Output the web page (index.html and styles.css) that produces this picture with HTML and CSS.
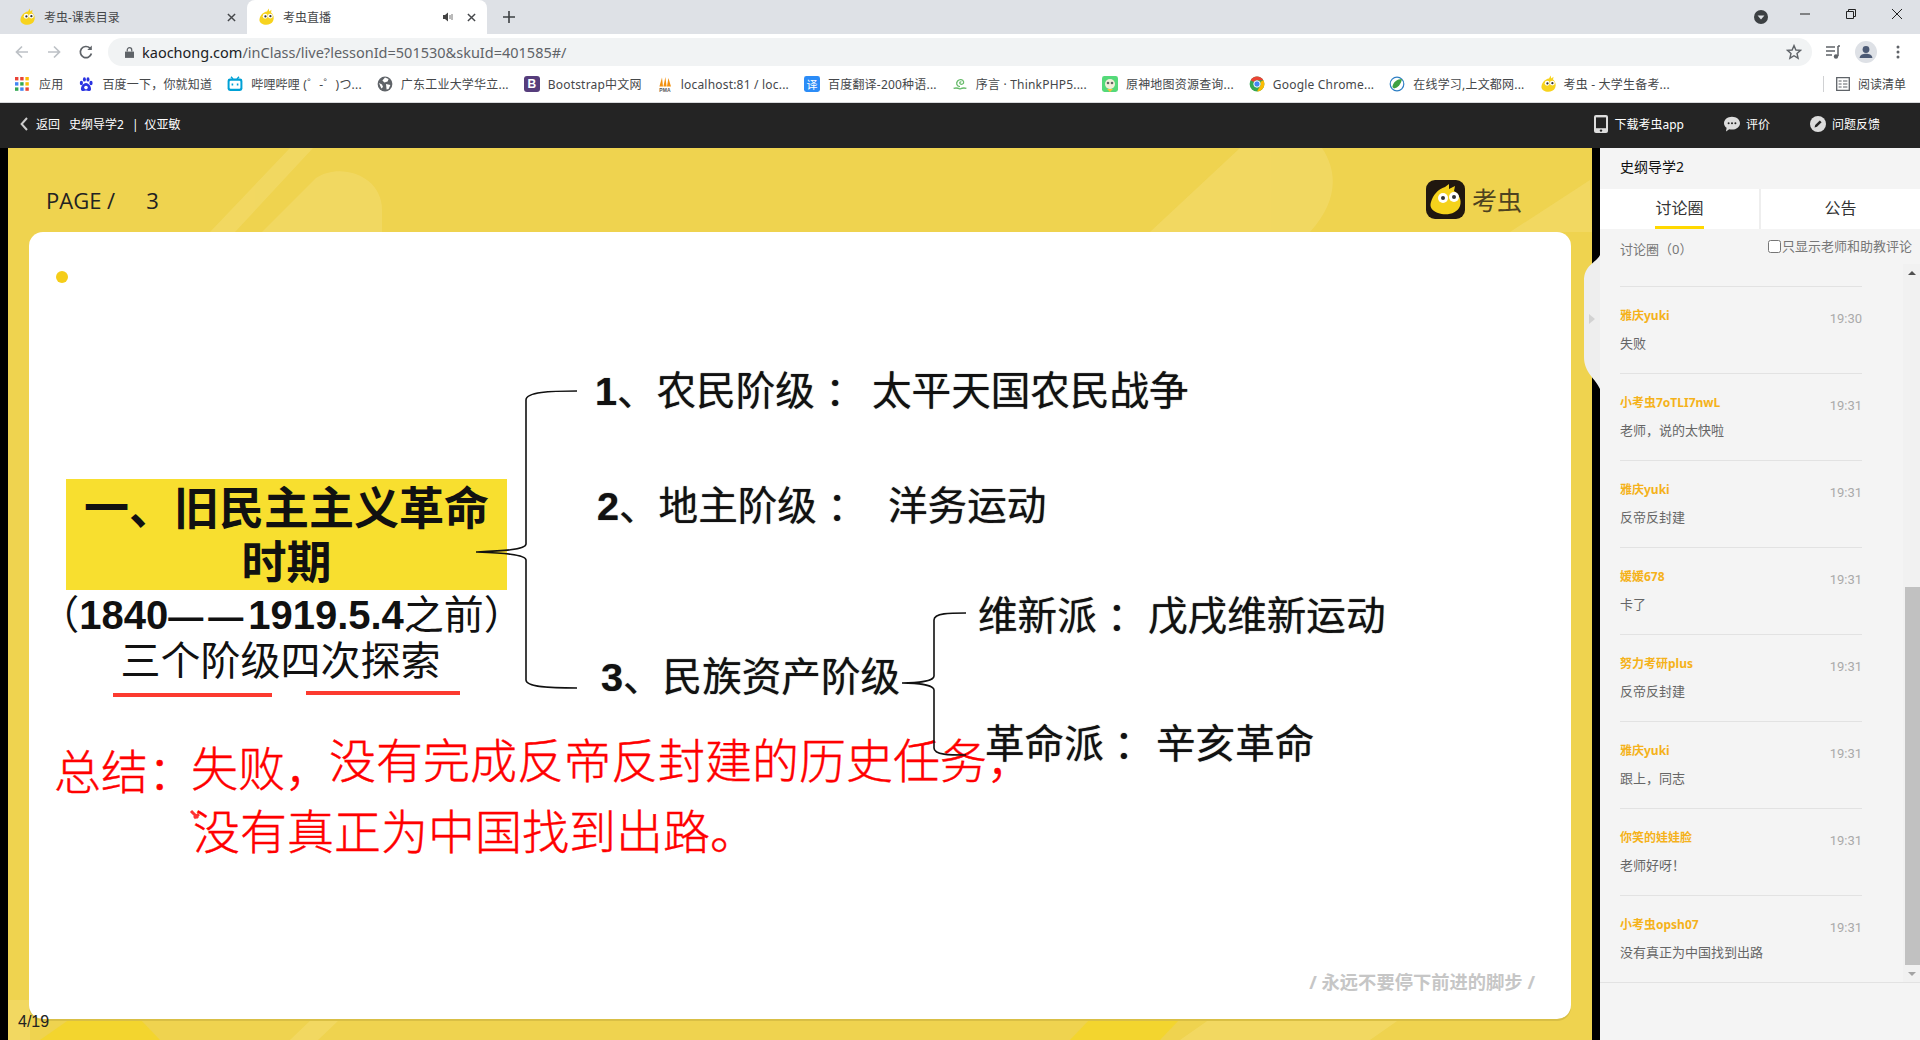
FILE: index.html
```html
<!DOCTYPE html>
<html lang="zh-CN">
    <head>
        <meta charset="utf-8">
        <title>考虫直播</title>
        <link rel="stylesheet" href="styles.css">
    </head>
    <body>
        <svg class="defs" width="0" height="0">
            <symbol id="chick" viewBox="0 0 16 16">
                <path d="M8 3 L9.5 .5 L10 3 L12 1.5 L11.6 4 C14 6 14.6 9 13.4 11.6 C12 14.6 8 15.6 5 14.6 C2.4 13.8 .8 12 1.4 9.6 C2 6.4 4.4 3.6 8 3 Z" fill="#f7d31e"/>
                <circle cx="6.4" cy="7.4" r="2.2" fill="#fff"/>
                <circle cx="11" cy="7.2" r="2.2" fill="#fff"/>
                <circle cx="6.6" cy="7.5" r="1" fill="#333"/>
                <circle cx="11" cy="7.3" r="1" fill="#333"/>
            </symbol>
        </svg>

        <div class="tabstrip">
            <div class="tab">
                <svg class="favicon"><use href="#chick"/></svg>
                <span class="tab-title">考虫-课表目录</span>
                <svg class="tab-close" viewBox="0 0 10 10"><path d="M1 1 L9 9 M9 1 L1 9"/></svg>
            </div>
            <div class="tab tab--active">
                <svg class="favicon"><use href="#chick"/></svg>
                <span class="tab-title">考虫直播</span>
                <svg class="tab-sound" viewBox="0 0 12 12"><path d="M1 4 H3 L6 1.5 V10.5 L3 8 H1 Z" fill="#444"/><path d="M8 4 V8 M10 3 V9" stroke="#777" fill="none"/></svg>
                <svg class="tab-close" viewBox="0 0 10 10"><path d="M1 1 L9 9 M9 1 L1 9"/></svg>
            </div>
            <svg class="tab-new" viewBox="0 0 12 12"><path d="M6 0 V12 M0 6 H12"/></svg>
            <div class="window-controls">
                <svg class="profile-drop" viewBox="0 0 14 14"><circle cx="7" cy="7" r="7" fill="#3c4043"/><path d="M3.6 5.4 H10.4 L7 9.6 Z" fill="#dee1e6"/></svg>
                <svg class="win-btn win-min" viewBox="0 0 10 10"><path d="M0 5 H10"/></svg>
                <svg class="win-btn win-max" viewBox="0 0 10 10"><path d="M.5 2.5 H7.5 V9.5 H.5 Z M2.5 2.5 V.5 H9.5 V7.5 H7.5"/></svg>
                <svg class="win-btn win-close" viewBox="0 0 10 10"><path d="M0 0 L10 10 M10 0 L0 10"/></svg>
            </div>
        </div>

        <div class="toolbar">
            <svg class="nav-icon nav-off" viewBox="0 0 16 16"><path d="M14 8 H2.5 M8 2.5 L2.5 8 L8 13.5"/></svg>
            <svg class="nav-icon nav-off" viewBox="0 0 16 16"><path d="M2 8 H13.5 M8 2.5 L13.5 8 L8 13.5"/></svg>
            <svg class="nav-icon" viewBox="0 0 16 16"><path d="M13.4 9.5 A5.6 5.6 0 1 1 12 4.2"/><path d="M13.8 1.5 V6 H9.3 Z" fill="#5f6368" stroke="none"/></svg>
            <div class="omnibox">
                <svg class="lock" viewBox="0 0 10 12"><path d="M0 5 H10 V12 H0 Z" fill="#5f6368"/><path d="M2.5 5 V3.2 A2.5 2.5 0 0 1 7.5 3.2 V5" fill="none" stroke="#5f6368" stroke-width="1.4"/></svg>
                <span class="url"><span class="url-host">kaochong.com</span>/inClass/live?lessonId=501530&amp;skuId=401585#/</span>
                <svg class="star" viewBox="0 0 16 16"><path d="M8 1.6 L9.9 6 L14.6 6.4 L11 9.5 L12.1 14.2 L8 11.7 L3.9 14.2 L5 9.5 L1.4 6.4 L6.1 6 Z"/></svg>
            </div>
            <svg class="tool-media" viewBox="0 0 16 16"><path d="M1 3 H10 M1 7 H10 M1 11 H7 M13 2 V12" fill="none" stroke="#5f6368" stroke-width="1.5"/><path d="M13 2 H15" stroke="#5f6368" stroke-width="1.5"/><circle cx="11" cy="12.5" r="2.2" fill="#5f6368"/></svg>
            <svg class="tool-avatar" viewBox="0 0 22 22"><circle cx="11" cy="11" r="11" fill="#dee1e6"/><circle cx="11" cy="8.5" r="3.4" fill="#4c5a75"/><path d="M4.6 17 C5 13.6 8 12.8 11 12.8 C14 12.8 17 13.6 17.4 17 Z" fill="#4c5a75"/></svg>
            <svg class="tool-menu" viewBox="0 0 4 14"><circle cx="2" cy="2" r="1.5"/><circle cx="2" cy="7" r="1.5"/><circle cx="2" cy="12" r="1.5"/></svg>
        </div>

        <div class="bookmarks">
            <a class="bm bm--apps">
                <svg class="bm-icon" viewBox="0 0 14 14">
                    <rect width="3.4" height="3.4" fill="#ea4335"/><rect x="5.2" width="3.4" height="3.4" fill="#ea4335"/><rect x="10.4" width="3.4" height="3.4" fill="#fbbc04"/>
                    <rect y="5.2" width="3.4" height="3.4" fill="#4285f4"/><rect x="5.2" y="5.2" width="3.4" height="3.4" fill="#34a853"/><rect x="10.4" y="5.2" width="3.4" height="3.4" fill="#fbbc04"/>
                    <rect y="10.4" width="3.4" height="3.4" fill="#34a853"/><rect x="5.2" y="10.4" width="3.4" height="3.4" fill="#4285f4"/><rect x="10.4" y="10.4" width="3.4" height="3.4" fill="#ea4335"/>
                </svg>
                应用
            </a>
            <a class="bm">
                <svg class="bm-icon" viewBox="0 0 16 16"><g fill="#2932e1"><ellipse cx="3.4" cy="7" rx="1.6" ry="2.2"/><ellipse cx="6.4" cy="3.4" rx="1.5" ry="2.2"/><ellipse cx="10" cy="3.4" rx="1.5" ry="2.2"/><ellipse cx="13" cy="7" rx="1.6" ry="2.2"/><path d="M8 7 C11 7 13.4 11 13 13.4 C12.6 15.6 10 15 8 14.6 C6 15 3.4 15.6 3 13.4 C2.6 11 5 7 8 7 Z"/></g><circle cx="8" cy="11.6" r="1.8" fill="#fff"/></svg>
                百度一下，你就知道
            </a>
            <a class="bm">
                <svg class="bm-icon" viewBox="0 0 16 16"><path d="M4 .8 L6 3 M12 .8 L10 3" stroke="#00a1d6" stroke-width="1.4"/><rect x=".6" y="2.6" width="14.8" height="12.4" rx="2.4" fill="#00a1d6"/><rect x="2.6" y="4.8" width="10.8" height="8" rx="1" fill="#fff"/><path d="M5.4 7.6 V9.4 M10.6 7.6 V9.4" stroke="#00a1d6" stroke-width="1.6"/></svg>
                哔哩哔哩 (゜-゜)つ...
            </a>
            <a class="bm">
                <svg class="bm-icon" viewBox="0 0 16 16"><circle cx="8" cy="8" r="7.4" fill="#5f6368"/><path d="M8 1.6 L11.6 3 L10.6 5.4 L7.4 6.4 L5.4 4.4 Z M9 8 L13.4 9 L11.6 13 L9.6 13.6 Z M2 7 L5 8.6 L6 11 L4.4 12.6 Z" fill="#fff"/></svg>
                广东工业大学华立...
            </a>
            <a class="bm">
                <svg class="bm-icon" viewBox="0 0 16 16"><rect width="16" height="16" rx="3" fill="#563d7c"/><text x="8" y="12.4" class="bm-glyph">B</text></svg>
                Bootstrap中文网
            </a>
            <a class="bm">
                <svg class="bm-icon" viewBox="0 0 16 16"><path d="M2.4 10.4 L5 1.4 L6 10.4 Z M6.4 10.4 L8.4 1 L9.6 10.4 Z M10 10.4 L11.4 2 L14 10.4 Z" fill="#f29111"/><text x="8" y="15.8" class="bm-pma">PMA</text></svg>
                localhost:81 / loc...
            </a>
            <a class="bm">
                <svg class="bm-icon" viewBox="0 0 16 16"><rect width="16" height="16" rx="2.4" fill="#2b8cf7"/><text x="8" y="12.6" class="bm-yi">译</text></svg>
                百度翻译-200种语...
            </a>
            <a class="bm">
                <svg class="bm-icon" viewBox="0 0 16 16"><g fill="none" stroke="#67bb6a" stroke-width="1.3"><path d="M8 10.6 C4.6 10.6 3.8 7 5.6 5 C7.4 3 11 3.2 11.6 5.8 C12 7.8 9.6 9 8.2 7.8 C7 6.6 8.4 5.4 9.4 6"/><path d="M1.6 12.4 C4 11.6 6 12 8 13 C10 12 12 11.6 14.4 12.4"/></g></svg>
                序言 · ThinkPHP5....
            </a>
            <a class="bm">
                <svg class="bm-icon" viewBox="0 0 16 16"><rect width="16" height="16" rx="2.4" fill="#54d979"/><circle cx="8" cy="8" r="5" fill="#f1eed8"/><circle cx="6" cy="7" r="1.3" fill="#666"/><circle cx="10" cy="7" r="1.3" fill="#666"/><path d="M5 13 H11 L8 16 Z" fill="#f0c53a"/></svg>
                原神地图资源查询...
            </a>
            <a class="bm">
                <svg class="bm-icon" viewBox="0 0 16 16"><circle cx="8" cy="8" r="7.4" fill="#34a853"/><path d="M8 .6 A7.4 7.4 0 0 1 14.4 4.3 H8 A3.7 3.7 0 0 0 4.8 6.1 L1.6 4.3 A7.4 7.4 0 0 1 8 .6 Z" fill="#ea4335"/><path d="M14.4 4.3 A7.4 7.4 0 0 1 8 15.4 L11.2 9.8 A3.7 3.7 0 0 0 11.2 6 Z" fill="#fbbc04"/><circle cx="8" cy="8" r="3.2" fill="#4285f4" stroke="#fff" stroke-width="1"/></svg>
                Google Chrome...
            </a>
            <a class="bm">
                <svg class="bm-icon" viewBox="0 0 16 16"><circle cx="8" cy="8" r="6.8" fill="#fff" stroke="#2f7fc4" stroke-width="1.2"/><path d="M3.4 11 C4 6 8 3 13 3 C12 8 9 12 5 12.4 Z" fill="#3fa142"/></svg>
                在线学习,上文都网...
            </a>
            <a class="bm">
                <svg class="bm-icon bm-icon--chick"><use href="#chick"/></svg>
                考虫 - 大学生备考...
            </a>
            <a class="bm bm--reader">
                <svg class="bm-icon" viewBox="0 0 14 14"><path d="M.7 .7 H13.3 V13.3 H.7 Z" fill="none" stroke="#5f6368" stroke-width="1.3"/><path d="M2.6 4 H5.6 M7 4 H11.4 M2.6 7 H5.6 M7 7 H11.4 M2.6 10 H5.6 M7 10 H11.4" stroke="#5f6368" stroke-width="1.2"/></svg>
                阅读清单
            </a>
        </div>

        <div class="topbar">
            <a class="back">
                <svg class="back-icon" viewBox="0 0 8 14"><path d="M7 1 L1.6 7 L7 13"/></svg>
                返回
            </a>
            <span class="course">史纲导学2</span>
            <span class="sep">|</span>
            <span class="teacher">仪亚敏</span>
            <div class="topbar-actions">
                <a class="action">
                    <svg class="action-phone" viewBox="0 0 14 18"><rect width="14" height="18" rx="2" fill="#ddd"/><rect x="2" y="2.4" width="10" height="10.8" fill="#242424"/><circle cx="7" cy="15.6" r="1.2" fill="#242424"/></svg>
                    下载考虫app
                </a>
                <a class="action">
                    <svg class="action-icon" viewBox="0 0 16 16"><path d="M8 .8 C12.4 .8 16 3.6 16 7.2 C16 10.8 12.4 13.6 8 13.6 C7 13.6 6 13.4 5.2 13.2 L2 15.6 L2.6 11.8 C1 10.6 0 9 0 7.2 C0 3.6 3.6 .8 8 .8 Z" fill="#ddd"/><circle cx="4.6" cy="7.2" r="1" fill="#242424"/><circle cx="8" cy="7.2" r="1" fill="#242424"/><circle cx="11.4" cy="7.2" r="1" fill="#242424"/></svg>
                    评价
                </a>
                <a class="action">
                    <svg class="action-icon" viewBox="0 0 16 16"><circle cx="8" cy="8" r="8" fill="#ddd"/><path d="M4.6 11.4 L5.2 9 L9.8 4.4 L11.6 6.2 L7 10.8 Z" fill="#242424"/></svg>
                    问题反馈
                </a>
            </div>
        </div>

        <div class="main">
            <div class="stage">
                <div class="slide">
                    <svg class="slide-bg" viewBox="8 148 1584 892">
                        <g fill="#f6e07c" opacity=".42">
                            <path d="M290 148 H313 L235 232 H210 Z"/>
                            <path d="M262 232 L316 178 C340 162 382 175 382 210 V232 Z"/>
                            <path d="M1150 232 L1240 148 H1322 C1340 175 1335 205 1310 232 Z"/>
                            <path d="M1590 180 L1510 232 H1592 Z"/>
                            <path d="M8 1040 L8 1000 L30 1000 L30 1040 Z"/>
                            <path d="M290 1040 L312 1019 H340 L318 1040 Z"/>
                            <path d="M1180 1040 L1210 1019 H1400 L1370 1040 Z"/>
                        </g>
                        <path d="M40 1040 L70 1019 H140 L160 1040 Z M1070 1040 L1090 1019 H1180 L1160 1040 Z" fill="#f5d521" opacity=".7"/>
                    </svg>
                    <div class="slide-head">
                        <div class="page-no"><span>PAGE /</span><span class="page-num">3</span></div>
                        <div class="brand">
                            <svg class="brand-logo" viewBox="0 0 40 40">
                                <rect width="39" height="39" rx="9" fill="#20170f"/>
                                <path d="M19 7 L23 4 L23 9 L29 6 L28 11 C33 14 36 20 34 26 C31 34 20 36 12 33 C7 31 3 28 5 22 C7 15 12 9 19 7 Z" fill="#f5d21c"/>
                                <circle cx="17" cy="18" r="5" fill="#fff"/><circle cx="28" cy="17" r="5" fill="#fff"/>
                                <circle cx="17" cy="18" r="2" fill="#333"/><circle cx="28" cy="17" r="2" fill="#333"/>
                            </svg>
                            <span class="brand-name">考虫</span>
                        </div>
                    </div>
                    <div class="card">
                        <span class="dot"></span>
                        <div class="head-box">一、旧民主主义革命<br>时期</div>
                        <div class="head-date">（<b>1840<span class="dashes">——</span>1919.5.4</b>之前）</div>
                        <div class="head-sub">三个阶级四次探索</div>

                        <div class="node node-1"><b>1</b>、农民阶级 ：</div>
                        <div class="node node-1b">太平天国农民战争</div>
                        <div class="node node-2"><b>2</b>、地主阶级 ：</div>
                        <div class="node node-2b">洋务运动</div>
                        <div class="node node-3"><b>3</b>、民族资产阶级</div>
                        <div class="node node-4">维新派 ：</div>
                        <div class="node node-4b">戊戌维新运动</div>
                        <div class="node node-5">革命派 ：</div>
                        <div class="node node-5b">辛亥革命</div>

                        <div class="note note-1">总结：</div>
                        <div class="note note-1b">失败，</div>
                        <div class="note note-1c">没有完成反帝反封建的历史任务，</div>
                        <div class="note note-2">没有真正为中国找到出路。</div>

                        <svg class="marks" viewBox="29 232 1542 787">
                            <g fill="none" stroke="#111" stroke-width="1.6">
                                <path d="M577 391 C550 391 526 392 526 400 V544 C526 550 500 551 476 552 C500 553 526 554 526 560 V680 C526 687 550 688 577 688"/>
                                <path d="M966 613 C950 613 934 613 934 620 V676 C934 681 918 683 902 683 C918 683 934 685 934 690 V748 C934 755 950 755 966 755"/>
                            </g>
                            <path d="M113 695 H272 M306 693 H460" stroke="#fc3a2f" stroke-width="4"/>
                            <path d="M191 811 L198 818 M194 818 L199 814" stroke="#f33" stroke-width="3"/>
                        </svg>

                        <div class="motto">/ 永远不要停下前进的脚步 /</div>
                    </div>
                    <span class="pager">4/19</span>
                </div>
            </div>

            <svg class="side-handle" viewBox="0 0 16 134">
                <path d="M16 0 C12 8 0 10 0 26 V102 C0 118 12 124 16 134 Z" fill="#eee"/>
                <path d="M5 59 L11 64 L5 69 Z" fill="#d2d2d2"/>
            </svg>

            <aside class="side">
                <div class="side-title">史纲导学2</div>
                <div class="side-tabs">
                    <div class="side-tab"><span class="side-tab-label side-tab-label--on">讨论圈</span></div>
                    <div class="side-tab"><span class="side-tab-label">公告</span></div>
                </div>
                <div class="side-filter">
                    <span>讨论圈（0）</span>
                    <label class="only-teacher"><input type="checkbox" class="only-check">只显示老师和助教评论</label>
                </div>
                <div class="side-body">
                    <ul class="comments">
                        <li class="comment"><div class="comment-head"><span class="comment-name">雅庆yuki</span><span class="comment-time">19:30</span></div><p class="comment-text">失败</p></li>
                        <li class="comment"><div class="comment-head"><span class="comment-name">小考虫7oTLI7nwL</span><span class="comment-time">19:31</span></div><p class="comment-text">老师，说的太快啦</p></li>
                        <li class="comment"><div class="comment-head"><span class="comment-name">雅庆yuki</span><span class="comment-time">19:31</span></div><p class="comment-text">反帝反封建</p></li>
                        <li class="comment"><div class="comment-head"><span class="comment-name">媛媛678</span><span class="comment-time">19:31</span></div><p class="comment-text">卡了</p></li>
                        <li class="comment"><div class="comment-head"><span class="comment-name">努力考研plus</span><span class="comment-time">19:31</span></div><p class="comment-text">反帝反封建</p></li>
                        <li class="comment"><div class="comment-head"><span class="comment-name">雅庆yuki</span><span class="comment-time">19:31</span></div><p class="comment-text">跟上，同志</p></li>
                        <li class="comment"><div class="comment-head"><span class="comment-name">你笑的娃娃脸</span><span class="comment-time">19:31</span></div><p class="comment-text">老师好呀！</p></li>
                        <li class="comment"><div class="comment-head"><span class="comment-name">小考虫opsh07</span><span class="comment-time">19:31</span></div><p class="comment-text">没有真正为中国找到出路</p></li>
                    </ul>
                    <div class="scrollbar">
                        <span class="scroll-arrow scroll-arrow--up"></span>
                        <span class="scroll-space"></span>
                        <span class="scroll-thumb"></span>
                        <span class="scroll-arrow scroll-arrow--down"></span>
                    </div>
                </div>
            </aside>
        </div>
    </body>
</html>
```

FILE: styles.css
```css
* {
    box-sizing: border-box;
}

html,
body {
    margin: 0;
    height: 1040px;
    overflow: hidden;
}

body {
    display: flex;
    flex-direction: column;
    font-family: "Noto Sans", "Noto Sans CJK SC", sans-serif;
    font-size: 12px;
    color: #222;
    background: #000;
}

.defs {
    position: absolute;
}

/* browser chrome */
.tabstrip {
    display: flex;
    align-items: center;
    height: 34px;
    flex-shrink: 0;
    background: #dee1e6;
    color: #444;
}

.tab {
    display: flex;
    align-items: center;
    width: 247px;
    height: 34px;
    padding: 0 11px 0 19px;
}

.tab--active {
    width: 240px;
    padding-left: 11px;
    background: #fff;
    border-radius: 8px 8px 0 0;
}

.favicon {
    width: 18px;
    height: 18px;
    flex-shrink: 0;
}

.tab-title {
    margin-left: 7px;
    flex: 1;
    color: #45474a;
}

.tab-close {
    width: 9px;
    height: 9px;
    fill: none;
    stroke: #45474a;
    stroke-width: 1.6;
}

.tab-sound {
    width: 12px;
    height: 12px;
    margin-right: 13px;
}

.tab-new {
    width: 12px;
    height: 12px;
    margin-left: 16px;
    fill: none;
    stroke: #3c4043;
    stroke-width: 1.6;
}

.window-controls {
    display: flex;
    align-items: center;
    margin-left: auto;
    padding-right: 18px;
    height: 34px;
}

.profile-drop {
    width: 14px;
    height: 14px;
    margin-right: 32px;
}

.win-btn {
    width: 10px;
    height: 10px;
    fill: none;
    stroke: #222;
    stroke-width: 1;
    margin-bottom: 6px;
}

.win-min,
.win-max {
    margin-right: 36px;
}

.toolbar {
    display: flex;
    align-items: center;
    height: 32px;
    flex-shrink: 0;
    padding: 4px 0 0 14px;
    background: #fff;
}

.nav-icon {
    width: 16px;
    height: 16px;
    margin-right: 16px;
    fill: none;
    stroke: #5f6368;
    stroke-width: 1.7;
}

.nav-off {
    stroke: #bdc1c6;
}

.omnibox {
    display: flex;
    align-items: center;
    width: 1704px;
    height: 28px;
    margin-left: -2px;
    padding: 0 10px 0 17px;
    border-radius: 14px;
    background: #f1f3f4;
}

.lock {
    width: 9px;
    height: 11px;
}

.url {
    margin-left: 8px;
    margin-top: -1px;
    font-size: 14.5px;
    color: #5f6368;
}

.url-host {
    color: #202124;
}

.star {
    width: 16px;
    height: 16px;
    margin-left: auto;
    fill: none;
    stroke: #5f6368;
    stroke-width: 1.4;
}

.tool-media {
    width: 16px;
    height: 16px;
    margin-left: 13px;
}

.tool-avatar {
    width: 22px;
    height: 22px;
    margin-left: 14px;
}

.tool-menu {
    width: 4px;
    height: 14px;
    margin-left: 19px;
    fill: #5f6368;
}

.bookmarks {
    display: flex;
    align-items: center;
    height: 37px;
    flex-shrink: 0;
    gap: 15px;
    padding: 0 0 0 15px;
    background: #fff;
    border-bottom: 1px solid #d8d9db;
    color: #45474a;
    letter-spacing: .2px;
    white-space: nowrap;
}

.bm {
    display: flex;
    align-items: center;
    gap: 8px;
}

.bm--apps {
    gap: 10px;
}

.bm-icon {
    width: 16px;
    height: 16px;
    flex-shrink: 0;
}

.bm-icon--chick {
    width: 18px;
    height: 18px;
    margin-right: -2px;
}

.bm--apps .bm-icon {
    width: 14px;
    height: 14px;
}

.bm--reader {
    margin-left: auto;
    margin-right: 14px;
    padding-left: 12px;
    border-left: 1px solid #d0d1d3;
    height: 16px;
    letter-spacing: 0;
}

.bm--reader .bm-icon {
    width: 14px;
    height: 14px;
}

.bm-glyph {
    font: bold 12px "Liberation Sans", sans-serif;
    fill: #fff;
    text-anchor: middle;
}

.bm-pma {
    font: bold 5px "Liberation Sans", sans-serif;
    fill: #555;
    text-anchor: middle;
}

.bm-yi {
    font: 11px "Noto Sans CJK SC", sans-serif;
    fill: #fff;
    text-anchor: middle;
}

.topbar {
    display: flex;
    align-items: center;
    height: 45px;
    flex-shrink: 0;
    padding: 0 0 3px 20px;
    background: #242424;
    color: #fff;
}

.back {
    display: flex;
    align-items: center;
    gap: 8px;
}

.back-icon {
    width: 8px;
    height: 14px;
    fill: none;
    stroke: #ccc;
    stroke-width: 2;
}

.course {
    margin-left: 9px;
}

.sep {
    margin: 0 6px 0 8px;
}

.topbar-actions {
    display: flex;
    align-items: center;
    margin-left: auto;
    gap: 40px;
    padding-right: 40px;
}

.action {
    display: flex;
    align-items: center;
    gap: 6px;
}

.action-phone {
    width: 14px;
    height: 18px;
}

.action-icon {
    width: 16px;
    height: 16px;
}

.main {
    position: relative;
    display: flex;
    flex: 1;
    min-height: 0;
}

/* slide */
.stage {
    width: 1600px;
    padding: 0 8px;
    background: #000;
}

.slide {
    position: relative;
    display: flex;
    flex-direction: column;
    height: 100%;
    padding: 0 21px 21px;
    background: #efd34f;
}

.slide-bg {
    position: absolute;
    left: 0;
    top: 0;
    width: 100%;
    height: 100%;
}

.slide-head {
    position: relative;
    display: flex;
    justify-content: space-between;
    align-items: center;
    height: 84px;
    padding: 19px 49px 0 17px;
}

.page-no {
    display: flex;
    gap: 31px;
    font-size: 22px;
    font-family: "Open Sans", sans-serif;
    color: #222;
}

.brand {
    display: flex;
    align-items: center;
    gap: 6px;
}

.brand-logo {
    width: 40px;
    height: 40px;
}

.brand-name {
    font-size: 25px;
    line-height: 40px;
    color: #4d4220;
}

.card {
    position: relative;
    flex: 1;
    border-radius: 14px;
    background: #fff;
    box-shadow: 0 2px 0 #d9bf45;
    color: #111;
}

.dot {
    position: absolute;
    left: 27px;
    top: 39px;
    width: 12px;
    height: 12px;
    border-radius: 50%;
    background: #f5cd19;
}

.head-box {
    position: absolute;
    left: 37px;
    top: 247px;
    width: 441px;
    height: 111px;
    padding-top: 2px;
    background: #f8df2f;
    font-size: 45px;
    font-weight: 700;
    line-height: 54px;
    text-align: center;
}

.head-date,
.head-sub {
    position: absolute;
    left: 0;
    font-size: 40px;
    line-height: 50px;
    text-align: center;
    white-space: nowrap;
}

.head-date {
    top: 357px;
    width: 505px;
}

.head-date b {
    font-family: "Liberation Sans", "Noto Sans CJK SC", sans-serif;
}

.dashes {
    font-size: 35px;
    letter-spacing: 5px;
}

.head-sub {
    top: 403px;
    width: 503px;
}

.node {
    position: absolute;
    font-size: 39.6px;
    line-height: 50px;
    white-space: nowrap;
    text-shadow: 0 0 1px #555;
}

.node b {
    font-family: "Liberation Sans", sans-serif;
}

.node-1 { left: 566px; top: 133px; }
.node-1b { left: 843px; top: 133px; }
.node-2 { left: 568px; top: 248px; }
.node-2b { left: 859px; top: 248px; }
.node-3 { left: 572px; top: 419px; }
.node-4 { left: 949px; top: 358px; }
.node-4b { left: 1119px; top: 358px; }
.node-5 { left: 956px; top: 486px; }
.node-5b { left: 1127px; top: 486px; }

.note {
    position: absolute;
    font-size: 47px;
    font-weight: 300;
    line-height: 60px;
    color: #f00;
    white-space: nowrap;
    -webkit-text-stroke: .4px #f00;
}

.note-1 { left: 25px; top: 509px; }
.note-1b { left: 162px; top: 506px; }
.note-1c { left: 300px; top: 498px; }
.note-2 { left: 164px; top: 569px; }

.marks {
    position: absolute;
    left: 0;
    top: 0;
    width: 100%;
    height: 100%;
    pointer-events: none;
}

.motto {
    position: absolute;
    right: 36px;
    top: 738px;
    font-size: 18.3px;
    line-height: 24px;
    font-weight: 700;
    color: #c6c6c6;
}

.pager {
    position: absolute;
    left: 10px;
    top: 863px;
    font: 16px/22px "Liberation Sans", sans-serif;
    color: #222;
}

.side-handle {
    position: absolute;
    left: 1584px;
    top: 107px;
    width: 16px;
    height: 134px;
}

/* sidebar */
.side {
    display: flex;
    flex-direction: column;
    width: 320px;
    background: #f4f4f4;
}

.side-title {
    height: 41px;
    padding-left: 20px;
    font-size: 14px;
    line-height: 38px;
    color: #111;
}

.side-tabs {
    display: flex;
    height: 40px;
    background: #fff;
}

.side-tab {
    flex: 1;
    display: flex;
    justify-content: center;
    font-size: 16px;
    color: #333;
}

.side-tab + .side-tab {
    border-left: 2px solid #eee;
}

.side-tab:first-child {
    flex: 0 0 159px;
}

.side-tab-label {
    height: 40px;
    line-height: 38px;
}

.side-tab-label--on {
    border-bottom: 3px solid #ffd800;
}

.side-filter {
    display: flex;
    justify-content: space-between;
    height: 35px;
    padding: 10px 8px 0 20px;
    font-size: 13px;
    line-height: 20px;
    color: #777;
}

.only-teacher {
    display: flex;
    align-items: center;
    height: 14px;
    font-size: 13px;
}

.only-check {
    flex-shrink: 0;
    width: 13px;
    height: 13px;
    margin: 0 1px 0 0;
}

.side-body {
    display: flex;
    height: 719px;
    border-bottom: 1px solid #e2e2e2;
}

.comments {
    flex: 1;
    list-style: none;
    margin: 0;
    padding: 22px 41px 0 20px;
}

.comment {
    height: 87px;
    padding-top: 20px;
    border-top: 1px solid #e2e2e2;
}

.comment-head {
    display: flex;
    justify-content: space-between;
    height: 21px;
}

.comment-name {
    font-size: 12px;
    font-weight: 700;
    line-height: 18px;
    color: #f5b21a;
}

.comment-time {
    margin-top: 3px;
    font: 13px/18px Roboto, sans-serif;
    color: #aaa;
}

.comment-text {
    margin: 6px 0 0;
    font-size: 13px;
    line-height: 18px;
    color: #666;
}

.scrollbar {
    display: flex;
    flex-direction: column;
    align-items: flex-end;
    width: 17px;
    background: #f1f1f1;
}

.scroll-arrow {
    display: flex;
    align-items: center;
    justify-content: center;
    width: 17px;
    height: 17px;
    flex-shrink: 0;
}

.scroll-arrow::before {
    content: "";
    border-left: 4px solid transparent;
    border-right: 4px solid transparent;
}

.scroll-arrow--up::before {
    border-bottom: 4px solid #505050;
}

.scroll-arrow--down::before {
    border-top: 4px solid #a3a3a3;
}

.scroll-space {
    flex: 1;
}

.scroll-thumb {
    width: 15px;
    height: 378px;
    flex-shrink: 0;
    background: #c1c1c1;
}
```
